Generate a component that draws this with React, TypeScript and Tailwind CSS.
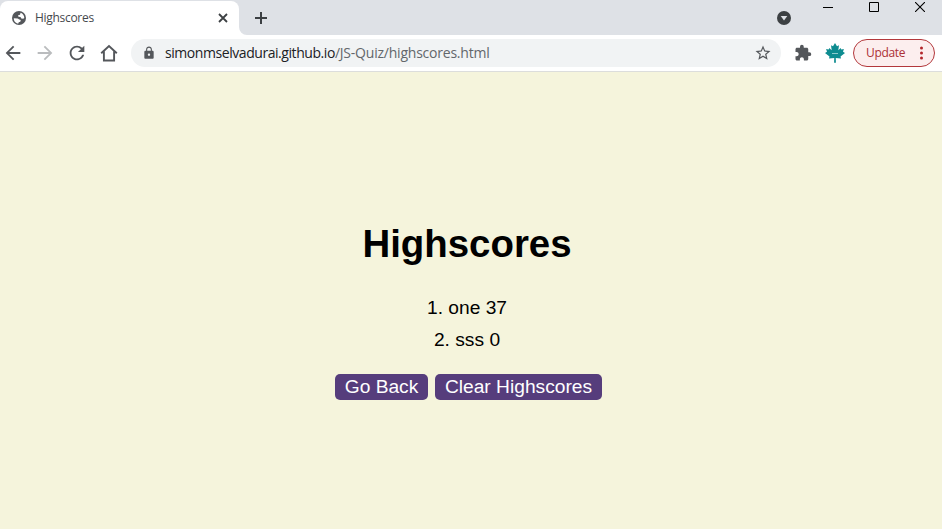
import React from "react";
import { MdArrowBack, MdArrowForward, MdRefresh, MdLock, MdStarBorder, MdExtension } from "react-icons/md";

function Globe() {
  return (
    <svg className="size-[14px]" viewBox="0 0 14 14">
      <circle cx="7" cy="7" r="7" fill="#54575b" />
      <path
        d="M8.6 1.8c2.2.7 3.7 2.8 3.7 5.1l-1.1.9-1.9-.3-.8-1.6-2.1-.2-.3-1.4 1.9-.5zM1.8 7.2l3.9.2 1.6 1.1 1.5.5-.5 1.7-1.6.6-.3 1.3C3.7 12.4 1.7 10 1.8 7.2z"
        fill="#fff"
      />
    </svg>
  );
}

function MapleLeaf() {
  return (
    <svg className="ml-[13px] size-5" viewBox="0 0 20 20">
      <path
        d="M10 0l2 3.2 2-.9-.7 4.9 2.4-2.2.6 1.5 2.6-.4-.9 2.6L20 10l-4.5 3.5.5 2-5.2-.5.1 4.8H9.1l.1-4.8-5.2.5.5-2L0 10l2-1.3-.9-2.6 2.6.4L4.300 5l2.4 2.200L6 2.300l2 .9z"
        fill="#0e8c90"
      />
      <path d="M7 10.500h6" stroke="#8ccbcd" strokeWidth="1" />
    </svg>
  );
}

function TabStrip() {
  return (
    <div className="flex h-[35px] bg-[#dee1e6]">
      <div className="mt-px flex h-[34px] w-[239px] items-center rounded-t-lg bg-white pl-3">
        <Globe />
        <span className="ml-[9px] w-[150px] text-[12px] leading-4 tracking-[-0.3px] text-[#45494d]">Highscores</span>
        <svg className="ml-[33px] size-[10px]" viewBox="0 0 10 10" stroke="#3c4043" strokeWidth="1.8">
          <path d="M1 1l8 8M9 1l-8 8" />
        </svg>
      </div>
      <svg className="size-2 self-end" viewBox="0 0 8 8" fill="#fff">
        <path d="M0 0v8h8A8 8 0 0 1 0 0" />
      </svg>
      <svg className="ml-2 mt-3 size-3" viewBox="0 0 12 12" stroke="#3c4043" strokeWidth="2">
        <path d="M6 0v12M0 6h12" />
      </svg>
      <div className="ml-auto flex items-start">
        <svg className="mr-8 mt-[11px] size-[14px]" viewBox="0 0 14 14">
          <circle cx="7" cy="7" r="7" fill="#3c4043" />
          <path d="M3.7 5h6.6L7 9.6z" fill="#dee1e6" />
        </svg>
        <svg className="mr-9 mt-0.5 size-[10px]" viewBox="0 0 10 10" stroke="#000">
          <path d="M0 5.500h10" />
        </svg>
        <svg className="mr-9 mt-0.5 size-[10px]" viewBox="0 0 10 10" stroke="#000" fill="none">
          <path d="M.5.5h9v9h-9z" />
        </svg>
        <svg className="mr-[17px] mt-0.5 size-[10px]" viewBox="0 0 10 10" stroke="#000" strokeWidth="1.1">
          <path d="M0 0l10 10M10 0L0 10" />
        </svg>
      </div>
    </div>
  );
}

function Toolbar() {
  return (
    <div className="flex h-[37px] items-center border-b border-[#dcdddc] bg-white pl-0.5 pr-[7px]">
      <MdArrowBack className="size-[22px] text-[#54575b]" />
      <MdArrowForward className="ml-2.5 size-[22px] text-[#babcbe]" />
      <MdRefresh className="ml-2.5 size-[22px] text-[#54575b]" />
      <svg className="ml-3 size-[18px]" viewBox="0 0 18 18" fill="none" stroke="#54575b" strokeWidth="1.9">
        <path d="M1.200 9.200L9 2l7.800 7.200M3.900 7.500v9h10.200v-9" />
      </svg>
      <div className="ml-[13px] flex h-7 w-[650px] items-center rounded-full bg-[#f1f3f4] pl-[11px] pr-[9px]">
        <MdLock className="size-[14px] text-[#54575b]" />
        <span className="ml-[9px] whitespace-nowrap text-[14px] leading-5 tracking-[-0.44px] text-[#202124]">
          simonmselvadurai.github.io
          <span className="tracking-[-0.22px] text-[#63676b]">/JS-Quiz/highscores.html</span>
        </span>
        <MdStarBorder className="ml-auto size-[18px] text-[#54575b]" />
      </div>
      <MdExtension className="ml-[13px] size-[18px] text-[#54575b]" />
      <MapleLeaf />
      <div className="ml-auto flex h-7 w-[82px] items-center rounded-full border border-[#b3383c] bg-[#fceeee] pl-3">
        <span className="text-[12px] leading-4 tracking-[-0.35px] text-[#ad3035]">Update</span>
        <svg className="ml-auto mr-[11px] h-[14px] w-[3px]" viewBox="0 0 3 14" fill="#b3262b">
          <circle cx="1.5" cy="2" r="1.5" />
          <circle cx="1.5" cy="7" r="1.5" />
          <circle cx="1.5" cy="12" r="1.5" />
        </svg>
      </div>
    </div>
  );
}

export default function App() {
  return (
    <div className="flex h-[529px] w-[942px] flex-col overflow-hidden bg-[#f5f4dc] font-['Open_Sans','Noto_Sans',sans-serif]">
      <TabStrip />
      <Toolbar />
      <main className="flex flex-1 flex-col items-center pr-2 pt-[150px] font-['Liberation_Sans',Arial,sans-serif] text-black">
        <h1 className="text-[38.4px] font-bold leading-[44px]">Highscores</h1>
        <ol className="mt-[26px] text-center text-[19.2px] leading-8">
          <li>1. one 37</li>
          <li>2. sss 0</li>
        </ol>
        <div className="ml-[3px] mt-[18px] flex gap-[7px] text-[19.2px] leading-[26px] text-white">
          <button className="h-[26px] w-[93px] whitespace-nowrap rounded-[5px] bg-[#563d7c]">Go Back</button>
          <button className="h-[26px] w-[167px] whitespace-nowrap rounded-[5px] bg-[#563d7c]">Clear Highscores</button>
        </div>
      </main>
    </div>
  );
}
